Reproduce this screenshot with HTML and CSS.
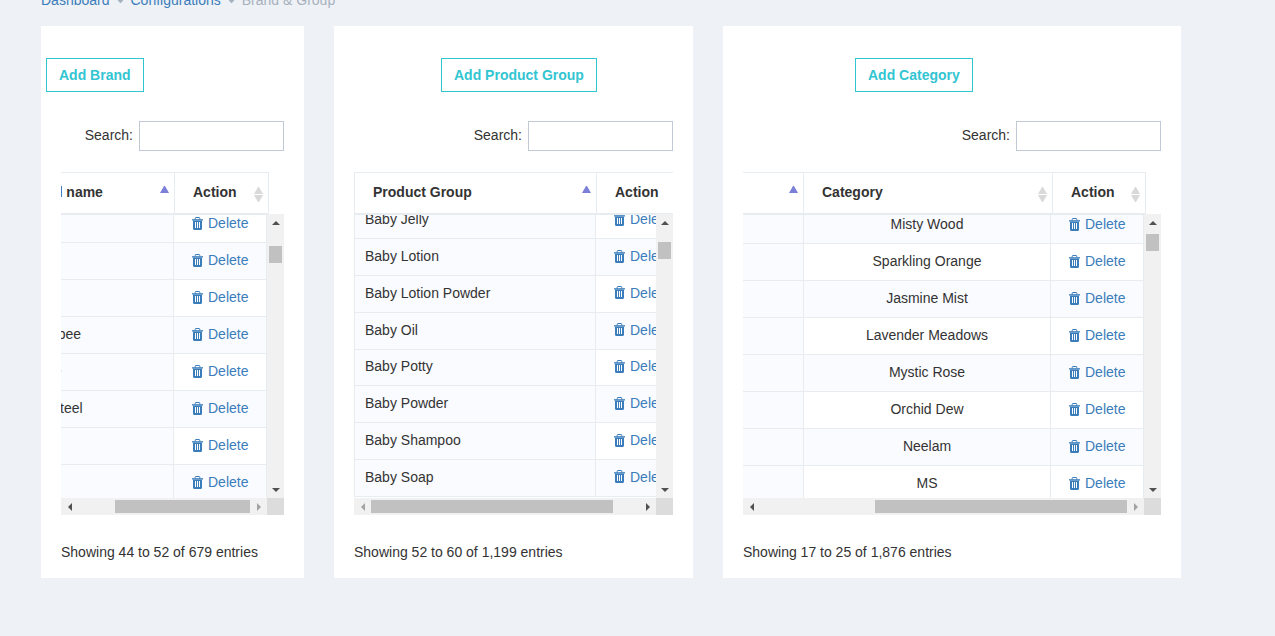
FILE: index.html
```html
<!DOCTYPE html>
<html>
<head>
    <title>Brand &amp; Group</title>
    <link rel="stylesheet" href="styles.css">
</head>
<body>
    <svg class="sprite" width="0" height="0">
        <symbol id="trash" viewBox="0 0 11 13">
            <path d="M3.2 2.5V1.2c0-.4.3-.7.7-.7h3.2c.4 0 .7.3.7.7v1.3" fill="none" stroke="currentColor"/>
            <path d="M0 2.2h11v1.3H0z" fill="currentColor"/>
            <path d="M1 3.5h9v8.3c0 .6-.5 1.2-1.1 1.2H2.100c-.6 0-1.100-.6-1.100-1.200z" fill="currentColor"/>
            <path class="stripes" d="M3.500 5v6M5.500 5v6M7.500 5v6" fill="none" stroke-width="1"/>
        </symbol>
    </svg>

    <div class="crumbs">
        <a href="#">Dashboard</a><i class="dot"></i>
        <a href="#">Configurations</a><i class="dot"></i>
        <span>Brand &amp; Group</span>
    </div>

    <div class="cards">
        <!-- brand -->
        <div class="card card-brand">
            <button class="add-btn">Add Brand</button>
            <div class="search"><label>Search:</label><input type="text"></div>
            <div class="dt-head">
                <table>
                    <colgroup><col class="c-name"><col class="c-action"></colgroup>
                    <tr>
                        <th><div class="th-in">Brand name<span class="sort sort-up"></span></div></th>
                        <th><div class="th-in">Action<span class="sort"></span></div></th>
                    </tr>
                </table>
            </div>
            <div class="dt-mid">
                <div class="dt-body">
                    <table>
                        <colgroup><col class="c-name"><col class="c-action"></colgroup>
                        <tr><td></td><td class="act"><a href="#"><svg><use href="#trash"></use></svg>Delete</a></td></tr>
                        <tr><td></td><td class="act"><a href="#"><svg><use href="#trash"></use></svg>Delete</a></td></tr>
                        <tr><td></td><td class="act"><a href="#"><svg><use href="#trash"></use></svg>Delete</a></td></tr>
                        <tr><td>Mr Bumblebee</td><td class="act"><a href="#"><svg><use href="#trash"></use></svg>Delete</a></td></tr>
                        <tr><td>Care Home</td><td class="act"><a href="#"><svg><use href="#trash"></use></svg>Delete</a></td></tr>
                        <tr><td>Stainless Steel</td><td class="act"><a href="#"><svg><use href="#trash"></use></svg>Delete</a></td></tr>
                        <tr><td></td><td class="act"><a href="#"><svg><use href="#trash"></use></svg>Delete</a></td></tr>
                        <tr><td></td><td class="act"><a href="#"><svg><use href="#trash"></use></svg>Delete</a></td></tr>
                    </table>
                </div>
                <div class="vbar">
                    <span class="sb-btn"><i class="tri tri-up"></i></span>
                    <div class="vtrack"><div class="vthumb"></div></div>
                    <span class="sb-btn"><i class="tri tri-down"></i></span>
                </div>
            </div>
            <div class="hbar">
                <span class="sb-btn"><i class="tri tri-left"></i></span>
                <div class="htrack"><div class="hthumb"></div></div>
                <span class="sb-btn"><i class="tri tri-right off"></i></span>
                <span class="corner"></span>
            </div>
            <div class="info">Showing 44 to 52 of 679 entries</div>
        </div>

        <!-- product group -->
        <div class="card card-group">
            <button class="add-btn">Add Product Group</button>
            <div class="search"><label>Search:</label><input type="text"></div>
            <div class="dt-head">
                <table>
                    <colgroup><col class="c-name"><col class="c-action"></colgroup>
                    <tr>
                        <th><div class="th-in">Product Group<span class="sort sort-up"></span></div></th>
                        <th><div class="th-in">Action<span class="sort"></span></div></th>
                    </tr>
                </table>
            </div>
            <div class="dt-mid">
                <div class="dt-body">
                    <table>
                        <colgroup><col class="c-name"><col class="c-action"></colgroup>
                        <tr><td>Baby Jelly</td><td class="act"><a href="#"><svg><use href="#trash"></use></svg>Delete</a></td></tr>
                        <tr><td>Baby Lotion</td><td class="act"><a href="#"><svg><use href="#trash"></use></svg>Delete</a></td></tr>
                        <tr><td>Baby Lotion Powder</td><td class="act"><a href="#"><svg><use href="#trash"></use></svg>Delete</a></td></tr>
                        <tr><td>Baby Oil</td><td class="act"><a href="#"><svg><use href="#trash"></use></svg>Delete</a></td></tr>
                        <tr><td>Baby Potty</td><td class="act"><a href="#"><svg><use href="#trash"></use></svg>Delete</a></td></tr>
                        <tr><td>Baby Powder</td><td class="act"><a href="#"><svg><use href="#trash"></use></svg>Delete</a></td></tr>
                        <tr><td>Baby Shampoo</td><td class="act"><a href="#"><svg><use href="#trash"></use></svg>Delete</a></td></tr>
                        <tr><td>Baby Soap</td><td class="act"><a href="#"><svg><use href="#trash"></use></svg>Delete</a></td></tr>
                    </table>
                </div>
                <div class="vbar">
                    <span class="sb-btn"><i class="tri tri-up"></i></span>
                    <div class="vtrack"><div class="vthumb"></div></div>
                    <span class="sb-btn"><i class="tri tri-down"></i></span>
                </div>
            </div>
            <div class="hbar">
                <span class="sb-btn"><i class="tri tri-left off"></i></span>
                <div class="htrack"><div class="hthumb"></div></div>
                <span class="sb-btn"><i class="tri tri-right"></i></span>
                <span class="corner"></span>
            </div>
            <div class="info">Showing 52 to 60 of 1,199 entries</div>
        </div>

        <!-- category -->
        <div class="card card-category">
            <button class="add-btn">Add Category</button>
            <div class="search"><label>Search:</label><input type="text"></div>
            <div class="dt-head">
                <table>
                    <colgroup><col class="c-first"><col class="c-name"><col class="c-action"></colgroup>
                    <tr>
                        <th><div class="th-in"><span></span><span class="sort sort-up"></span></div></th>
                        <th><div class="th-in">Category<span class="sort"></span></div></th>
                        <th><div class="th-in">Action<span class="sort"></span></div></th>
                    </tr>
                </table>
            </div>
            <div class="dt-mid">
                <div class="dt-body">
                    <table>
                        <colgroup><col class="c-first"><col class="c-name"><col class="c-action"></colgroup>
                        <tr><td></td><td>Misty Wood</td><td class="act"><a href="#"><svg><use href="#trash"></use></svg>Delete</a></td></tr>
                        <tr><td></td><td>Sparkling Orange</td><td class="act"><a href="#"><svg><use href="#trash"></use></svg>Delete</a></td></tr>
                        <tr><td></td><td>Jasmine Mist</td><td class="act"><a href="#"><svg><use href="#trash"></use></svg>Delete</a></td></tr>
                        <tr><td></td><td>Lavender Meadows</td><td class="act"><a href="#"><svg><use href="#trash"></use></svg>Delete</a></td></tr>
                        <tr><td></td><td>Mystic Rose</td><td class="act"><a href="#"><svg><use href="#trash"></use></svg>Delete</a></td></tr>
                        <tr><td></td><td>Orchid Dew</td><td class="act"><a href="#"><svg><use href="#trash"></use></svg>Delete</a></td></tr>
                        <tr><td></td><td>Neelam</td><td class="act"><a href="#"><svg><use href="#trash"></use></svg>Delete</a></td></tr>
                        <tr><td></td><td>MS</td><td class="act"><a href="#"><svg><use href="#trash"></use></svg>Delete</a></td></tr>
                    </table>
                </div>
                <div class="vbar">
                    <span class="sb-btn"><i class="tri tri-up"></i></span>
                    <div class="vtrack"><div class="vthumb"></div></div>
                    <span class="sb-btn"><i class="tri tri-down"></i></span>
                </div>
            </div>
            <div class="hbar">
                <span class="sb-btn"><i class="tri tri-left"></i></span>
                <div class="htrack"><div class="hthumb"></div></div>
                <span class="sb-btn"><i class="tri tri-right off"></i></span>
                <span class="corner"></span>
            </div>
            <div class="info">Showing 17 to 25 of 1,876 entries</div>
        </div>
    </div>
</body>
</html>
```

FILE: styles.css
```css
body {
    margin: 0;
    padding-left: 41px;
    background-color: #eef1f5;
    font-family: "Liberation Sans", Arial, sans-serif;
    font-size: 14px;
    color: #333;
    overflow: hidden;
}

a {
    color: #3b7dbb;
    text-decoration: none;
}

.sprite {
    display: block;
    height: 0;
}

.stripes {
    stroke: #fff;
}

/* breadcrumb, cut by the top of the window */
.crumbs {
    display: flex;
    align-items: center;
    height: 20px;
    margin-top: -10px;
    color: #a7b2c0;
}

.dot {
    width: 5px;
    height: 5px;
    margin: 0 8px;
    background-color: #a7b2c0;
    transform: rotate(45deg) scale(.8);
}

.cards {
    display: flex;
    gap: 30px;
    margin-top: 16px;
}

.card {
    box-sizing: border-box;
    padding: 32px 20px 16px;
    background-color: #fff;
}

.card-brand { width: 263px; }
.card-group { width: 359px; }
.card-category { width: 458px; }

.add-btn {
    display: block;
    height: 34px;
    padding: 0 12px;
    border: 1px solid #32c5d2;
    background-color: #fff;
    color: #32c5d2;
    font: bold 14px "Liberation Sans", Arial, sans-serif;
}

.card-brand .add-btn { margin-left: -15px; }
.card-group .add-btn { margin-left: 87px; }
.card-category .add-btn { margin-left: 112px; }

.search {
    display: flex;
    justify-content: flex-end;
    align-items: center;
    gap: 6px;
    margin-top: 29px;
}

.search label {
    padding-bottom: 2px;
}

.search input {
    box-sizing: border-box;
    width: 145px;
    height: 30px;
    border: 1px solid #c2cad8;
    background-color: #fff;
}

table {
    table-layout: fixed;
    border-collapse: separate;
    border-spacing: 0;
    width: max-content;
}

/* head */
.dt-head {
    height: 43px;
    margin-top: 21px;
    overflow: hidden;
}

th {
    box-sizing: border-box;
    height: 43px;
    padding: 0 5px 2px 18px;
    border-top: 1px solid #e7ecf1;
    border-right: 1px solid #e7ecf1;
    border-bottom: 2px solid #e7ecf1;
    text-align: left;
    color: #333;
    font-size: 14px;
}

.th-in {
    display: flex;
    justify-content: space-between;
    align-items: center;
    white-space: nowrap;
}

.sort {
    display: flex;
    flex-direction: column;
    gap: 1px;
    width: 9px;
    margin-top: 4px;
}

.sort::before,
.sort::after {
    content: "";
    border-left: 4.5px solid transparent;
    border-right: 4.5px solid transparent;
}

.sort::before {
    border-bottom: 7px solid #d9d9d9;
}

.sort::after {
    border-top: 7px solid #d9d9d9;
}

.sort-up {
    margin-top: -5px;
}

.sort-up::before {
    border-bottom: 7px solid #7b7fd8;
}

.sort-up::after {
    display: none;
}

/* body */
.dt-mid {
    display: flex;
    height: 283px;
}

.dt-body {
    flex: 1;
    min-width: 0;
    overflow: hidden;
}

td {
    box-sizing: border-box;
    height: 37px;
    padding: 0 0 2px 10px;
    border-right: 1px solid #e7ecf1;
    border-bottom: 1px solid #e7ecf1;
    white-space: nowrap;
}

td:first-child {
    background-color: #fafbfe;
}

td.act {
    padding-left: 18px;
}

td.act a {
    display: flex;
    align-items: center;
    gap: 5px;
}

td.act svg {
    flex: none;
    width: 11px;
    height: 13px;
}

tr:nth-child(even) td {
    background-color: #fafbfe;
}

/* scrollbars are drawn, the columns are scrolled by hand */
.vbar {
    display: flex;
    flex-direction: column;
    flex: none;
    width: 17px;
    margin-top: -1px;
    background-color: #f1f1f1;
}

.vtrack {
    flex: 1;
}

.vthumb {
    width: 13px;
    height: 17px;
    margin-left: 2px;
    background-color: #c1c1c1;
}

.hbar {
    display: flex;
    height: 17px;
    background-color: #f1f1f1;
}

.htrack {
    flex: 1;
    min-width: 0;
    padding-top: 2px;
}

.hthumb {
    height: 13px;
    background-color: #c1c1c1;
}

.corner {
    flex: none;
    width: 17px;
    background-color: #dcdcdc;
}

.sb-btn {
    display: flex;
    flex: none;
    justify-content: center;
    align-items: center;
    width: 17px;
    height: 17px;
}

.tri {
    width: 0;
    height: 0;
    border-style: solid;
    border-color: transparent;
}

.tri-up { border-width: 0 4px 4px; border-bottom-color: #505050; }
.tri-down { border-width: 4px 4px 0; border-top-color: #505050; }
.tri-left { border-width: 4px 4px 4px 0; border-right-color: #505050; }
.tri-right { border-width: 4px 0 4px 4px; border-left-color: #505050; }
.tri-left.off { border-right-color: #a3a3a3; }
.tri-right.off { border-left-color: #a3a3a3; }

.info {
    margin-top: 27px;
    line-height: 20px;
    white-space: nowrap;
}

/* per table: column widths and how far it is scrolled */
.card-brand .dt-head table { margin-left: -57px; }
.card-brand .dt-head .c-name { width: 171px; }
.card-brand .dt-head .c-action { width: 94px; }
.card-brand .dt-body table { margin: -9px 0 0 -81px; }
.card-brand .dt-body .c-name { width: 194px; }
.card-brand .dt-body .c-action { width: 93px; }
.card-brand .vthumb { margin-top: 15px; }
.card-brand .hthumb { width: 135px; margin-left: 37px; }
.card-brand .stripes { stroke: #c3a6bd; }

.card-group .dt-head table { border-left: 1px solid #e7ecf1; }
.card-group .dt-head .c-name { width: 242px; }
.card-group .dt-head .c-action { width: 94px; }
.card-group .dt-body table { margin-top: -12.6px; border-left: 1px solid #e7ecf1; }
.card-group .dt-body .c-name { width: 241px; }
.card-group .dt-body .c-action { width: 93px; }
.card-group td { height: 36.8px; }
.card-group .vthumb { margin-top: 11px; }
.card-group .hthumb { width: 242px; }

.card-category .c-first { width: 61px; }
.card-category .dt-head .c-name { width: 249px; }
.card-category .dt-head .c-action { width: 93px; }
.card-category .dt-body table { margin-top: -8px; }
.card-category .dt-body .c-name { width: 247px; }
.card-category .dt-body .c-action { width: 93px; }
.card-category td:nth-child(2) { padding-left: 0; text-align: center; }
.card-category tr:nth-child(even) td { background-color: #fff; }
.card-category tr:nth-child(even) td:first-child { background-color: #fafbfe; }
.card-category tr:nth-child(odd) td { background-color: #fafbfe; }
.card-category .vthumb { margin-top: 3px; }
.card-category .hthumb { width: 252px; margin-left: 115px; }
```
